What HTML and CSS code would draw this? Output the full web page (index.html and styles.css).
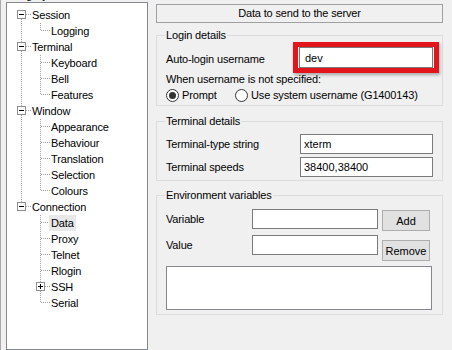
FILE: index.html
```html
<!DOCTYPE html>
<html>
<head>
<meta charset="utf-8">
<link rel="stylesheet" href="styles.css">
</head>
<body>
<div class="dlg">
  <div class="left">
    <div class="cat">Category:</div>
    <div class="tree">
      <div class="row"><span class="c rf"><svg width="9" height="9" viewBox="0 0 9 9"><rect x=".5" y=".5" width="8" height="8" fill="#fff" stroke="#8e8f8f"/><path d="M2 4.5h5" stroke="#000"/></svg></span><span class="lb">Session</span></div>
      <div class="row"><span class="c v"></span><span class="c l"></span><span class="lb">Logging</span></div>
      <div class="row"><span class="c r"><svg width="9" height="9" viewBox="0 0 9 9"><rect x=".5" y=".5" width="8" height="8" fill="#fff" stroke="#8e8f8f"/><path d="M2 4.5h5" stroke="#000"/></svg></span><span class="lb">Terminal</span></div>
      <div class="row"><span class="c v"></span><span class="c t"></span><span class="lb">Keyboard</span></div>
      <div class="row"><span class="c v"></span><span class="c t"></span><span class="lb">Bell</span></div>
      <div class="row"><span class="c v"></span><span class="c l"></span><span class="lb">Features</span></div>
      <div class="row"><span class="c r"><svg width="9" height="9" viewBox="0 0 9 9"><rect x=".5" y=".5" width="8" height="8" fill="#fff" stroke="#8e8f8f"/><path d="M2 4.5h5" stroke="#000"/></svg></span><span class="lb">Window</span></div>
      <div class="row"><span class="c v"></span><span class="c t"></span><span class="lb">Appearance</span></div>
      <div class="row"><span class="c v"></span><span class="c t"></span><span class="lb">Behaviour</span></div>
      <div class="row"><span class="c v"></span><span class="c t"></span><span class="lb">Translation</span></div>
      <div class="row"><span class="c v"></span><span class="c t"></span><span class="lb">Selection</span></div>
      <div class="row"><span class="c v"></span><span class="c l"></span><span class="lb">Colours</span></div>
      <div class="row"><span class="c rl"><svg width="9" height="9" viewBox="0 0 9 9"><rect x=".5" y=".5" width="8" height="8" fill="#fff" stroke="#8e8f8f"/><path d="M2 4.5h5" stroke="#000"/></svg></span><span class="lb">Connection</span></div>
      <div class="row"><span class="c"></span><span class="c t"></span><span class="lb sel">Data</span></div>
      <div class="row"><span class="c"></span><span class="c t"></span><span class="lb">Proxy</span></div>
      <div class="row"><span class="c"></span><span class="c t"></span><span class="lb">Telnet</span></div>
      <div class="row"><span class="c"></span><span class="c t"></span><span class="lb">Rlogin</span></div>
      <div class="row"><span class="c"></span><span class="c tb"><svg width="9" height="9" viewBox="0 0 9 9"><rect x=".5" y=".5" width="8" height="8" fill="#fff" stroke="#8e8f8f"/><path d="M2 4.5h5M4.5 2v5" stroke="#000"/></svg></span><span class="lb">SSH</span></div>
      <div class="row"><span class="c"></span><span class="c l"></span><span class="lb">Serial</span></div>
    </div>
  </div>

  <div class="right">
    <div class="hdr">Data to send to the server</div>

    <div class="grp g1">
      <div class="gt">Login details</div>
      <div class="frow">
        <span class="flab">Auto-login username</span>
        <span class="hl"><input class="inp in-login" type="text" value="dev"></span>
      </div>
      <div class="txt">When username is not specified:</div>
      <div class="radios">
        <span class="rad r1"><svg width="13" height="13" viewBox="0 0 13 13"><circle cx="6.5" cy="6.5" r="6" fill="#fff" stroke="#333"/><circle cx="6.5" cy="6.5" r="3.5" fill="#333"/></svg>Prompt</span>
        <span class="rad"><svg width="13" height="13" viewBox="0 0 13 13"><circle cx="6.5" cy="6.5" r="6" fill="#fff" stroke="#333"/></svg>Use system username (G1400143)</span>
      </div>
    </div>

    <div class="grp g2">
      <div class="gt">Terminal details</div>
      <div class="frow2 first"><span class="flab2">Terminal-type string</span><input class="inp in-term" type="text" value="xterm"></div>
      <div class="frow2"><span class="flab2">Terminal speeds</span><input class="inp in-term" type="text" value="38400,38400"></div>
    </div>

    <div class="grp g3">
      <div class="gt">Environment variables</div>
      <div class="erow first"><span class="elab">Variable</span><input class="inp in-env" type="text" value=""><button class="btn b-add">Add</button></div>
      <div class="erow"><span class="elab">Value</span><input class="inp in-env" type="text" value=""><button class="btn b-rem">Remove</button></div>
      <div class="list"></div>
    </div>
  </div>
</div>
</body>
</html>
```

FILE: styles.css
```css
* { box-sizing: border-box; }
html, body { margin: 0; }
body {
  background: #f0f0f0;
  font: 11px "Liberation Sans", Arial, sans-serif;
  color: #000;
  width: 452px;
  height: 350px;
  overflow: hidden;
}
.dlg {
  display: flex;
  height: 350px;
  padding-left: 5px;
  border-left: 1px solid #a9a9a9;
  --vd: repeating-linear-gradient(to bottom, #a0a0a0 0 1px, transparent 1px 2px);
  --hd: repeating-linear-gradient(to right, #a0a0a0 0 1px, transparent 1px 2px);
}

/* left tree */
.left { width: 142px; display: flex; flex-direction: column; flex: none; }
.cat { height: 14px; line-height: 14px; margin-top: -12px; margin-left: -3px; }
.tree {
  flex: 1;
  background: #fff;
  border: 1px solid #828790;
  padding: 4px 0 0 5px;
}
.row { display: flex; height: 16px; line-height: 16px; }
.c { flex: none; width: 19px; height: 16px; }
.c svg { display: block; margin: 3px 0 0 5px; }
.lb { padding: 0 2px; margin-left: -1px; white-space: nowrap; letter-spacing: -0.15px; }
.sel { background: #e8e8e8; }

.v  { background: var(--vd) 9px 0 / 1px 16px no-repeat; }
.t  { background: var(--vd) 9px 0 / 1px 16px no-repeat, var(--hd) 10px 7px / 9px 1px no-repeat; }
.l  { background: var(--vd) 9px 0 / 1px 8px no-repeat, var(--hd) 10px 7px / 9px 1px no-repeat; }
.tb { background: var(--vd) 9px 0 / 1px 16px no-repeat, var(--hd) 14px 7px / 5px 1px no-repeat; }
.r  { background: var(--vd) 9px 0 / 1px 16px no-repeat, var(--hd) 14px 7px / 5px 1px no-repeat; }
.rf { background: var(--vd) 9px 12px / 1px 4px no-repeat, var(--hd) 14px 7px / 5px 1px no-repeat; }
.rl { background: var(--vd) 9px 0 / 1px 3px no-repeat, var(--hd) 14px 7px / 5px 1px no-repeat; }

/* right panel */
.right { width: 287px; margin-left: 8px; display: flex; flex-direction: column; flex: none; }
.hdr {
  margin-top: 4px;
  height: 19px;
  border: 1px solid #a0a0a0;
  text-align: center;
  line-height: 17px;
  letter-spacing: -0.15px;
}
.grp { border: 1px solid #dcdcdc; padding: 0 0 0 9px; letter-spacing: -0.15px; }
.gt {
  margin: -8px 0 0 -1px;
  width: fit-content;
  padding: 0 1px;
  line-height: 14px;
  background: #f0f0f0;
}

.g1 { margin-top: 12px; padding-bottom: 2px; }
.frow { display: flex; align-items: center; height: 31px; }
.flab { width: 127px; padding-top: 2px; }
.hl {
  display: block;
  border: 5px solid #e3151c;
  padding: 0 1px;
  box-shadow: 1px 2px 3px rgba(0, 0, 0, 0.3);
}
.inp {
  display: block;
  margin: 0;
  border: 1px solid #7a7a7a;
  background: #fff;
  font: inherit;
  color: #000;
  padding: 0 3px;
  outline: none;
}
.in-login { width: 134px; height: 21px; padding-left: 5px; }
.txt { line-height: 14px; margin-top: -1px; }
.radios { display: flex; height: 16px; align-items: center; margin-top: 1px; }
.rad { display: flex; align-items: center; gap: 3px; }
.rad svg { display: block; flex: none; }
.r1 { width: 69px; }

.g2 { margin-top: 15px; padding-bottom: 3px; }
.frow2 { display: flex; align-items: center; height: 20px; margin-top: 3px; }
.frow2.first { margin-top: 6px; }
.flab2 { width: 134px; }
.in-term { width: 133px; height: 20px; }

.g3 { margin-top: 14px; padding-bottom: 4px; }
.erow { display: flex; align-items: flex-start; margin-top: 4px; }
.erow.first { margin-top: 7px; }
.elab { width: 86px; line-height: 20px; }
.in-env { width: 126px; height: 20px; }
.btn {
  margin: 1px 0 0 4px;
  width: 48px;
  height: 21px;
  padding: 0;
  background: #e1e1e1;
  border: 1px solid #adadad;
  font: inherit;
  color: #000;
}
.b-rem { margin-top: 5px; }
.list {
  margin-top: 5px;
  width: 266px;
  height: 44px;
  background: #fff;
  border: 1px solid #828790;
}
```
